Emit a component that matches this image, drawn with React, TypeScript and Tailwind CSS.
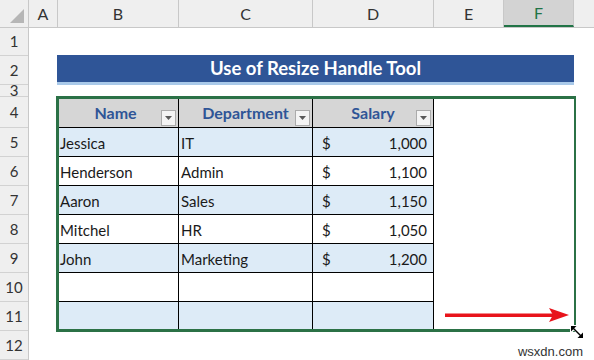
import React from "react";

const font = { fontFamily: "Lato, 'Open Sans', sans-serif" } as React.CSSProperties;

const cols = [
  { l: "A", w: "w-[29px]" },
  { l: "B", w: "w-[121px]" },
  { l: "C", w: "w-[134px]" },
  { l: "D", w: "w-[121px]" },
  { l: "E", w: "w-[70px]" },
];

const rowHeads = [
  { n: "1", h: "h-[28px]" },
  { n: "2", h: "h-[29px]" },
  { n: "3", h: "h-[12px]" },
  { n: "4", h: "h-[31px]" },
  { n: "5", h: "h-[29px]" },
  { n: "6", h: "h-[29px]" },
  { n: "7", h: "h-[29px]" },
  { n: "8", h: "h-[29px]" },
  { n: "9", h: "h-[29px]" },
  { n: "10", h: "h-[29px]" },
  { n: "11", h: "h-[29px]" },
  { n: "12", h: "h-[29px]" },
];

const data = [
  ["Jessica", "IT", "1,000"],
  ["Henderson", "Admin", "1,100"],
  ["Aaron", "Sales", "1,150"],
  ["Mitchel", "HR", "1,050"],
  ["John", "Marketing", "1,200"],
  ["", "", ""],
  ["", "", ""],
];

function Filter() {
  return (
    <div className="absolute right-[2px] bottom-[1px] w-[15px] h-[16px] border border-[#ababab] bg-[#f4f4f4] flex items-center justify-center">
      <svg width="7" height="4" viewBox="0 0 7 4">
        <polygon points="0,0 7,0 3.5,4" fill="#5a5a5a" />
      </svg>
    </div>
  );
}

export default function App() {
  return (
    <div className="w-[594px] h-[360px] overflow-hidden bg-white text-[#222]" style={font}>
      {/* column header */}
      <div className="flex h-[28px] bg-[#efefef] border-b border-[#c8c8c8] text-[16px] text-[#333]">
        <div className="w-[29px] border-r border-[#c8c8c8] flex items-end justify-end pr-[4px] pb-[4px]">
          <svg width="14" height="14" viewBox="0 0 14 14">
            <polygon points="14,0 14,14 0,14" fill="#b6b6b6" />
          </svg>
        </div>
        {cols.map((c) => (
          <div key={c.l} className={`${c.w} border-r border-[#c8c8c8] flex items-center justify-center`}>
            {c.l}
          </div>
        ))}
        <div className="w-[70px] bg-[#d3d3d3] border-r border-[#c8c8c8] border-b-2 border-b-[#217346] flex items-center justify-center text-[#217346]">
          F
        </div>
        <div className="flex-1" />
      </div>

      <div className="flex">
        {/* row headers */}
        <div className="w-[29px] bg-[#efefef] border-r border-[#c8c8c8] flex flex-col shrink-0">
          {rowHeads.map((r) => (
            <div
              key={r.n}
              className={`${r.h} border-b border-[#d2d2d2] flex items-center justify-center text-[15px] text-[#333] overflow-hidden`}
            >
              {r.n}
            </div>
          ))}
        </div>

        {/* sheet content */}
        <div className="flex-1 flex flex-col">
          <div className="h-[27px]" />
          <div className="ml-[28px] w-[517px] h-[30px] bg-[#2f5597] border-b-[3px] border-[#a9c9e9] flex items-center justify-center text-white font-bold text-[18.5px]">
            Use of Resize Handle Tool
          </div>
          <div className="h-[11px]" />
          <div className="relative ml-[27px] w-[520px] h-[236px] border-[3px] border-[#2b7146] flex">
            <div className="w-[375px] flex flex-col">
              <div className="h-[29px] flex border-b border-black bg-[#d6d6d6] text-[#2f5597] font-bold text-[16px]">
                <div className="relative w-[120px] border-r border-black flex items-center justify-center pr-[6px]">
                  Name
                  <Filter />
                </div>
                <div className="relative w-[134px] border-r border-black flex items-center justify-center">
                  Department
                  <Filter />
                </div>
                <div className="relative w-[121px] border-r border-black flex items-center justify-center">
                  Salary
                  <Filter />
                </div>
              </div>
              {data.map((d, i) => (
                <div
                  key={i}
                  className={`flex text-[15px] text-[#1a1a1a] ${i === 6 ? "h-[27px]" : "h-[29px] border-b border-black"} ${
                    i % 2 === 0 ? "bg-[#ddebf7]" : "bg-white"
                  }`}
                >
                  <div className="w-[120px] border-r border-black flex items-center pl-[1px] pt-[2px]">{d[0]}</div>
                  <div className="w-[134px] border-r border-black flex items-center pl-[2px] pt-[2px]">{d[1]}</div>
                  <div className="w-[121px] border-r border-black flex items-center justify-between pl-[9px] pr-[6px] pt-[2px]">
                    <span>{d[2] ? "$" : ""}</span>
                    <span>{d[2]}</span>
                  </div>
                </div>
              ))}
            </div>
            <div className="flex-1 bg-white flex items-end pl-[11px] pr-[5px] pb-[7px]">
              <svg width="124" height="14" viewBox="0 0 124 14">
                <rect x="0" y="5.5" width="110" height="3.5" fill="#e8141b" />
                <polygon points="104,0 124,7 104,14 108,7" fill="#e8141b" />
              </svg>
            </div>
            <svg
              className="absolute -right-[11px] -bottom-[10px]"
              width="14"
              height="14"
              viewBox="0 0 14 14"
            >
              <g stroke="#fff" strokeWidth="2.2" strokeLinejoin="round" fill="#fff">
                <polygon points="1,1 7,1 1,7" />
                <polygon points="13,13 7,13 13,7" />
                <line x1="3" y1="3" x2="11" y2="11" />
              </g>
              <polygon points="1,1 6.5,1 1,6.5" fill="#000" />
              <polygon points="13,13 7.5,13 13,7.5" fill="#000" />
              <line x1="3" y1="3" x2="11" y2="11" stroke="#000" strokeWidth="1.4" />
            </svg>
          </div>
          <div className="flex justify-end pr-[11px] pt-[10px]">
            <span className="text-[13px] text-[#333]" style={{ fontFamily: "'Liberation Sans', Arial, sans-serif" }}>
              wsxdn.com
            </span>
          </div>
        </div>
      </div>
    </div>
  );
}
